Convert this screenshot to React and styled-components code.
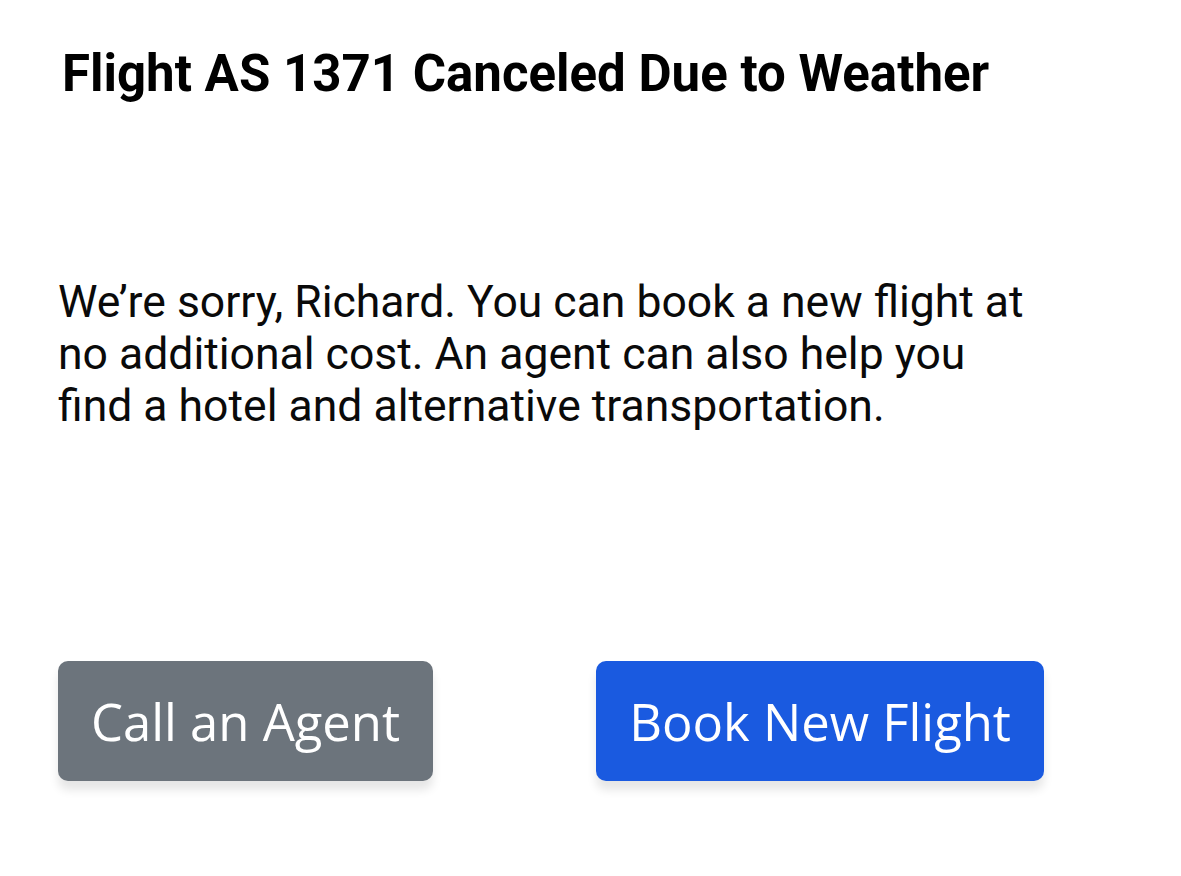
import React from "react";
import styled, { createGlobalStyle } from "styled-components";

const Global = createGlobalStyle`
  html, body { margin: 0; padding: 0; background: #ffffff; }
  body { font-family: Roboto, "Liberation Sans", sans-serif; }
`;

const Page = styled.div`
  width: 1181px;
  height: 876px;
  box-sizing: border-box;
  padding: 42px 0 0 58px;
  display: flex;
  flex-direction: column;
`;

const Title = styled.h1`
  margin: 0 0 0 4px;
  font-family: Roboto, "Liberation Sans", sans-serif;
  font-weight: 700;
  font-size: 51px;
  line-height: 64px;
  color: #000;
`;

const Message = styled.p`
  margin: 170px 0 0 0;
  max-width: 985px;
  font-family: Roboto, "Liberation Sans", sans-serif;
  font-weight: 400;
  font-size: 44.5px;
  line-height: 52px;
  color: #0a0a0a;
`;

const Actions = styled.div`
  margin-top: 229px;
  display: flex;
  gap: 163px;
`;

const Button = styled.button`
  height: 120px;
  padding: 0 33px;
  border: none;
  border-radius: 10px;
  background: ${(p) => (p.$primary ? "#1a5ae0" : "#6c747c")};
  color: #fff;
  font-family: "Open Sans", "Liberation Sans", sans-serif;
  font-weight: 400;
  font-size: 50.8px;
  box-shadow: 0 9px 10px rgba(0, 0, 0, 0.1);
  cursor: pointer;
`;

export default function App() {
  return (
    <>
      <Global />
      <Page>
        <Title>Flight AS 1371 Canceled Due to Weather</Title>
        <Message>
          We’re sorry, Richard. You can book a new flight at no additional cost. An agent can also help you find a hotel and alternative transportation.
        </Message>
        <Actions>
          <Button>Call an Agent</Button>
          <Button $primary>Book New Flight</Button>
        </Actions>
      </Page>
    </>
  );
}
